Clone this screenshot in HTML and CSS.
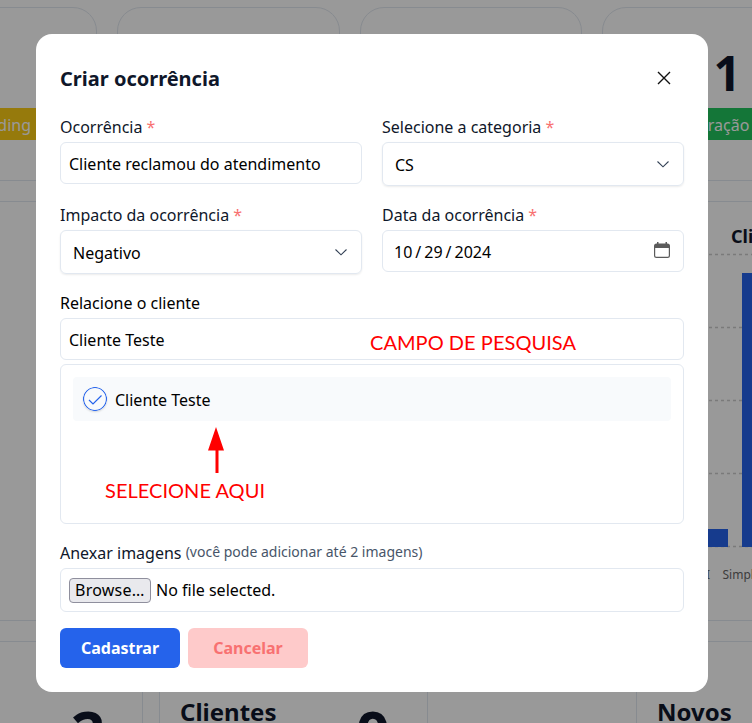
FILE: index.html
```html
<!DOCTYPE html>
<html lang="pt-BR">
<head>
<meta charset="utf-8">
<title>Criar ocorrência</title>
<link rel="stylesheet" href="styles.css">
</head>
<body>
<main class="dashboard">
  <section class="stats">
    <article class="card stat"><span class="badge badge-yellow end">Onboarding</span></article>
    <article class="card stat"></article>
    <article class="card stat"></article>
    <article class="card stat"><strong class="stat-number">1</strong><span class="badge badge-green">Operação</span></article>
  </section>
  <section class="card chart-card">
    <h2 class="chart-title">Clientes</h2>
    <svg class="chart" width="90" height="330" viewBox="0 0 90 330">
      <g class="grid-lines">
        <path d="M1 6.500H90M1 79.500H90M1 152.500H90M1 225.500H90M1 298.500H90"/>
      </g>
      <rect class="bar" x="14" y="281" width="36" height="18"/>
      <rect class="bar" x="64" y="25" width="36" height="274"/>
      <text class="axis" x="32" y="331" text-anchor="end">MEI</text>
      <text class="axis" x="44.500" y="331">Simples</text>
    </svg>
  </section>
  <section class="summary">
    <article class="card sum-card"><strong class="sum-number">2</strong></article>
    <article class="card sum-card"><h3>Clientes</h3><strong class="sum-number">0</strong></article>
    <article class="card sum-card joined"></article>
    <article class="card sum-card"><h3>Novos</h3></article>
  </section>
</main>
<div class="overlay">
  <form class="modal">
    <header class="modal-header">
      <h1>Criar ocorrência</h1>
      <svg class="close" width="24" height="24" viewBox="0 0 24 24"><path d="M6 6l12 12M18 6L6 18"/></svg>
    </header>
    <div class="fields">
      <div class="field">
        <label>Ocorrência <span class="req">*</span></label>
        <div class="control">Cliente reclamou do atendimento</div>
      </div>
      <div class="field">
        <label>Selecione a categoria <span class="req">*</span></label>
        <div class="control select"><span>CS</span><svg width="16" height="16" viewBox="0 0 16 16"><path d="M2.500 5.500L8 10.800l5.500-5.300"/></svg></div>
      </div>
      <div class="field">
        <label>Impacto da ocorrência <span class="req">*</span></label>
        <div class="control select"><span>Negativo</span><svg width="16" height="16" viewBox="0 0 16 16"><path d="M2.500 5.500L8 10.800l5.500-5.300"/></svg></div>
      </div>
      <div class="field">
        <label>Data da ocorrência <span class="req">*</span></label>
        <div class="control date"><span class="date-parts"><span>10</span><span>/</span><span>29</span><span>/</span><span>2024</span></span>
          <svg width="16" height="16" viewBox="0 0 16 16"><path fill-rule="evenodd" d="M3 0h1.500v1.500h7V0H13v1.500h.5A2.500 2.500 0 0 1 16 4v9.500A2.500 2.500 0 0 1 13.500 16h-11A2.500 2.500 0 0 1 0 13.500V4a2.500 2.500 0 0 1 2.500-2.500H3zM1.200 6v7.500c0 .8.500 1.300 1.300 1.300h11c.8 0 1.300-.5 1.300-1.300V6z"/></svg>
        </div>
      </div>
    </div>
    <div class="field client">
      <label class="dark">Relacione o cliente</label>
      <div class="control">Cliente Teste
        <svg class="note note-search" width="220" height="30"><text x="1" y="21" textLength="206">CAMPO DE PESQUISA</text></svg>
      </div>
      <div class="results">
        <div class="result">
          <svg class="check" width="24" height="24" viewBox="0 0 24 24"><circle cx="12" cy="12" r="11.500"/><path d="M6 13l4 4 8.500-8.500"/></svg>
          <span>Cliente Teste</span>
        </div>
        <svg class="note note-select" width="180" height="80"><path d="M112 0l8 23.500h-5.500V46h-3V23.500h-7.500z"/><text x="1" y="71" textLength="160">SELECIONE AQUI</text></svg>
      </div>
    </div>
    <div class="field files">
      <label>Anexar imagens <small>(você pode adicionar até 2 imagens)</small></label>
      <div class="control file"><span class="browse">Browse…</span><span>No file selected.</span></div>
    </div>
    <footer class="actions">
      <button type="button" class="btn primary">Cadastrar</button>
      <button type="button" class="btn cancel">Cancelar</button>
    </footer>
  </form>
</div>
</body>
</html>
```
FILE: styles.css
```css
* { box-sizing: border-box; }
body {
  margin: 0;
  height: 723px;
  overflow: hidden;
  background: #fff;
  color: #000;
  font: 16px/24px "Noto Sans", sans-serif;
}
h1, h2, h3 { margin: 0; color: #0f172a; }
.dashboard { width: 1000px; height: 723px; overflow: hidden; margin-left: -126px; padding-top: 7px; }
.card { border: 1px solid #e2e8f0; border-radius: 24px; }
.stats { display: grid; grid-template-columns: repeat(4, 222.800px); gap: 20px; }
.stat { height: 174px; display: flex; flex-direction: column; justify-content: flex-end; padding-bottom: 40px; }
.stat-number { color: #0f172a; font-size: 48px; line-height: 60px; margin: 0 0 5px 110px; }
.badge { height: 32px; line-height: 34px; color: #fff; }
.badge-yellow { background: #facc15; margin-right: -1px; text-align: right; }
.badge.end { width: 180px; padding-right: 24px; }
.badge-green { background: #22c55e; width: 190px; padding-left: 73px; }
.chart-card { height: 420px; margin-top: 20px; padding: 22px 0 0 803px; }
.chart-title { font-size: 18px; line-height: 24px; margin-left: 53px; }
.chart { display: block; overflow: visible; }
.grid-lines { stroke: #ccc; stroke-width: 1.500; stroke-dasharray: 3 3; fill: none; }
.bar { fill: #2563eb; }
.axis { fill: #666; font-size: 12px; }
.summary { display: flex; margin-top: 20px; }
.sum-card { flex: none; height: 174px; width: 269px; margin-right: 16px; padding: 54px 20px 0; display: flex; justify-content: space-between; }
.sum-card:first-child { justify-content: flex-end; padding-right: 37px; }
.sum-card:nth-child(2) { padding-right: 37px; margin-right: 0; }
.sum-card.joined { width: 208px; margin: 0; border-left: 0; border-right: 0; border-radius: 0; }
.sum-card h3 { font-size: 24px; line-height: 32px; }
.sum-number { color: #0f172a; font-size: 60px; line-height: 70px; }
.overlay {
  position: fixed;
  inset: 0;
  display: flex;
  align-items: flex-start;
  justify-content: center;
  padding: 34px 8px 0 0;
  background: rgba(0, 0, 0, .4);
}
.modal { width: 672px; height: 658px; padding: 24px; background: #fff; border-radius: 16px; }
.modal-header { display: flex; justify-content: space-between; height: 56px; padding: 7px 8px 0 0; }
.modal-header h1 { font-size: 20px; line-height: 28px; }
.close { fill: none; stroke: #111; stroke-width: 1.400; margin-top: 1px; }
.fields { display: grid; grid-template-columns: 302px 302px; column-gap: 20px; grid-auto-rows: 88px; }
.field label { display: block; height: 28px; line-height: 26px; color: #0f172a; }
.field label.dark { color: #000; }
.req { color: #f87171; }
.control { position: relative; height: 42px; border: 1px solid #e2e8f0; border-radius: 6px; padding: 0 8px; line-height: 42px; }
.select { display: flex; justify-content: space-between; align-items: center; height: 44px; padding: 0 12px; box-shadow: 0 1px 2px rgba(0, 0, 0, .08); }
.select span { padding-top: 2px; }
.select svg { fill: none; stroke: #334155; stroke-width: 1.100; }
.date { display: flex; justify-content: space-between; align-items: center; padding: 0 13px 0 11px; }
.date-parts { display: flex; gap: 3px; padding-top: 2px; }
.date svg { fill: #5b5b5b; margin-top: -3px; }
.results { position: relative; height: 160px; margin-top: 4px; padding: 12px; border: 1px solid #e2e8f0; border-radius: 6px; }
.result { display: flex; align-items: center; gap: 8px; height: 44px; padding: 0 10px; background: #f8fafc; border-radius: 4px; }
.result span { padding-top: 2px; }
.check { fill: none; stroke: #2563eb; stroke-width: 1.200; border-radius: 50%; box-shadow: 0 1px 2px rgba(0, 0, 0, .15); }
.result .check { margin-top: -1px; }
.note { position: absolute; fill: red; }
.note text { font: 400 20px Lato, sans-serif; }
.note-search { left: 308px; top: 10px; }
.note-select { left: 43px; top: 62px; }
.files { margin-top: 16px; }
.files small { font-size: 14px; color: #475569; position: relative; top: -2px; }
.file { height: 44px; display: flex; align-items: center; gap: 5px; }
.browse { width: 82px; height: 25px; line-height: 23px; padding: 0 5px; letter-spacing: .250px; border: 1px solid #8f8f9d; border-radius: 4px; background: #e9e9ed; }
.actions { display: flex; gap: 8px; margin-top: 16px; }
.btn { width: 120px; height: 40px; border: 0; border-radius: 6px; font: bold 16px "Noto Sans", sans-serif; }
.primary { background: #2563eb; color: #fff; }
.cancel { background: #fecaca; color: #f87171; }
```
